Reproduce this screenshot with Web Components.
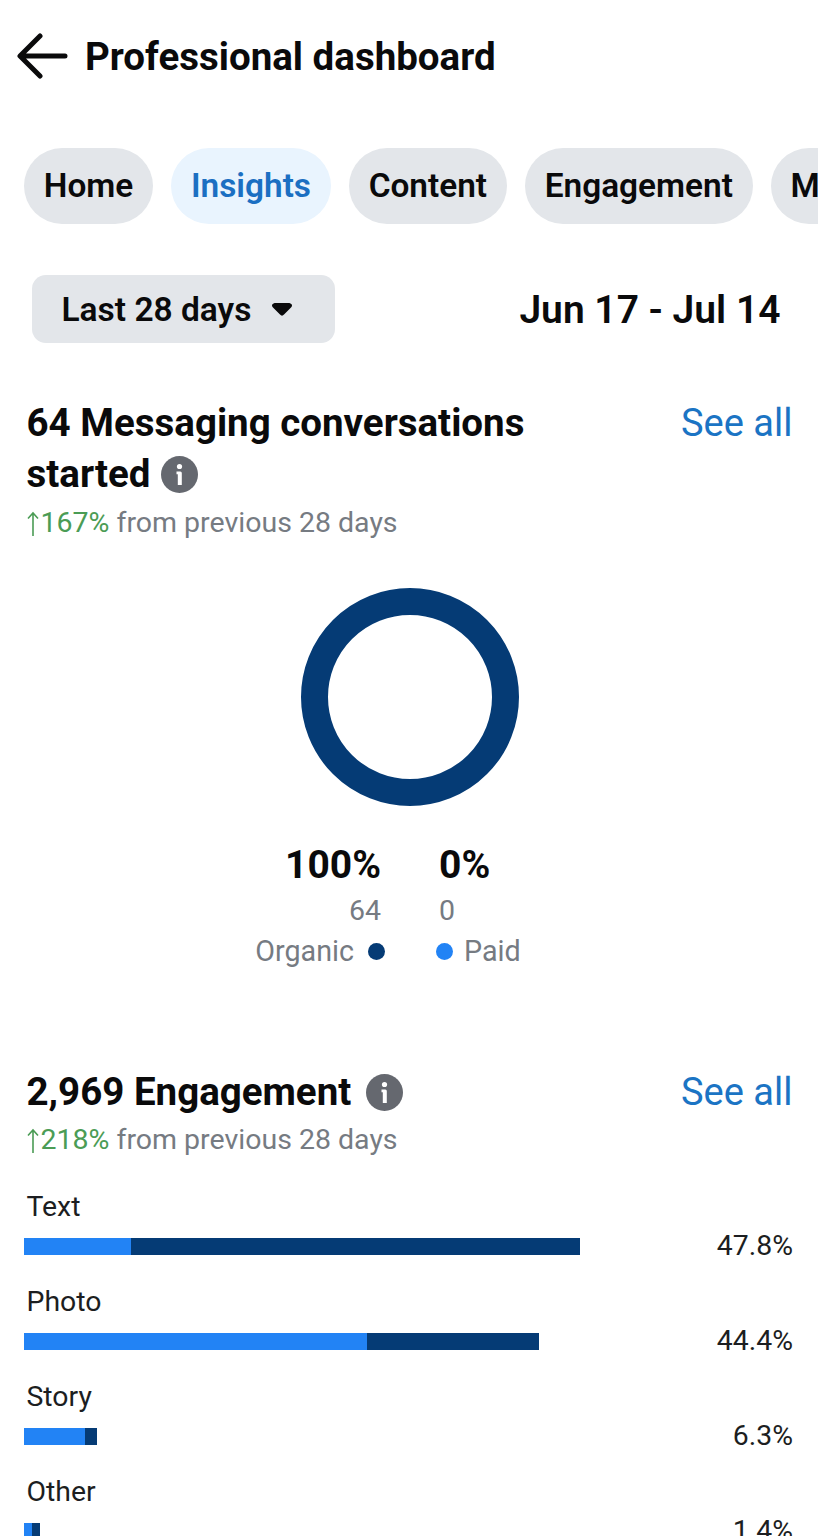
<!DOCTYPE html>
<html><head><meta charset="utf-8">
<style>
html,body{margin:0;padding:0;background:#fff;height:1536px;overflow:hidden}
body{font-family:Roboto,"Liberation Sans",sans-serif;color:#0a0a0b;width:818px}
</style></head><body>
<dash-header>Professional dashboard</dash-header>
<tab-bar>
  <tab-pill>Home</tab-pill><tab-pill active>Insights</tab-pill><tab-pill>Content</tab-pill><tab-pill>Engagement</tab-pill><tab-pill>Monetization</tab-pill>
</tab-bar>
<date-row></date-row>
<metric-section style="--top:54px;--ig:11px;--sg:7px" change="167%">64 Messaging conversations<br>started</metric-section>
<donut-chart></donut-chart>
<metric-section style="--top:95px;--ig:15px;--sg:5px" change="218%">2,969 Engagement</metric-section>
<bar-list>
  <bar-row label="Text" value="47.8%" total="556" light="107"></bar-row>
  <bar-row label="Photo" value="44.4%" total="515" light="343"></bar-row>
  <bar-row label="Story" value="6.3%" total="73" light="61"></bar-row>
  <bar-row label="Other" value="1.4%" total="16" light="8"></bar-row>
</bar-list>
<script>
const def=(name,html,cls)=>{
  const t=document.createElement('template');t.innerHTML=html;
  customElements.define(name,class extends HTMLElement{
    constructor(){super();this.attachShadow({mode:'open'}).appendChild(t.content.cloneNode(true));}
    connectedCallback(){cls&&cls(this,this.shadowRoot)}
  });
};
def('dash-header',`<style>
:host{display:flex;align-items:center;height:112px;padding-left:17px;gap:17px;font-size:38.500px;font-weight:700}
svg{display:block;width:51px;height:46px;flex:none}
</style><svg viewBox="0 0 51 46" fill="none" stroke="#0a0a0b" stroke-width="5" stroke-linecap="round" stroke-linejoin="round"><path d="M23 3 3 23 23 43M4 23H48"/></svg><slot></slot>`);
def('tab-bar',`<style>
:host{display:flex;gap:18px;margin-top:36px;padding-left:24px;overflow:hidden;width:794px}
</style><slot></slot>`);
def('tab-pill',`<style>
:host{display:block;flex:none;height:76px;line-height:75px;padding:0 19.800px;border-radius:38px;background:#e3e6ea;font-size:33.400px;font-weight:600;white-space:nowrap}
:host([active]){background:#e9f4fe;color:#1b6fc2}
</style><slot></slot>`);
def('date-row',`<style>
:host{display:flex;align-items:center;justify-content:space-between;margin-top:51px;padding:0 37.500px 0 32px;height:68px}
.dd{display:flex;align-items:center;box-sizing:border-box;width:303px;height:68px;background:#e3e6ea;border-radius:14px;padding-left:29.500px;gap:20px;font-size:33.500px;font-weight:600}
svg{width:22px;height:15px;display:block}
.d{font-size:39px;font-weight:600;padding-top:1px}
</style><div class="dd"><span>Last 28 days</span><svg viewBox="0 0 22 15"><path d="M5 1C8 1 14 1 17 1 21 1 22 3.500 20 5.500L13 12.500C11.800 14 10.200 14 9 12.500L2 5.500C0 3.500 1 1 5 1Z" fill="#0a0a0b"/></svg></div><div class="d">Jun 17 - Jul 14</div>`);
def('metric-section',`<style>
:host{display:block;margin-top:var(--top);padding:0 25.500px 0 26.500px}
.h{display:flex;justify-content:space-between;align-items:flex-start}
.t{font-size:38.500px;font-weight:700;line-height:51px}
.a{font-size:38px;color:#1b74c4;line-height:51px;padding-top:1px}
svg.i{width:37px;height:37px;vertical-align:-6px;margin-left:var(--ig)}
.s{font-size:28.500px;line-height:34px;color:#767b82;margin-top:var(--sg);white-space:nowrap}
.c{color:#4b9c55}
svg.u{width:12px;height:26px;vertical-align:-5px;margin:0 2px 0 0}
</style><div class="h"><div class="t"><slot></slot><svg class="i" viewBox="0 0 37 37"><circle cx="18.500" cy="18.500" r="18.500" fill="#65686f"/><circle cx="18.500" cy="10.500" r="2.600" fill="#fff"/><path d="M15.500 15.500H19.300Q20.800 15.500 20.800 17V29H16.800V18.300H15.500Z" fill="#fff"/></svg></div><div class="a">See all</div></div><div class="s"><svg class="u" viewBox="0 0 12 26" fill="none" stroke="#4b9c55" stroke-width="1.600"><path d="M6 25V2M1 7.500 6 2l5 5.500"/></svg><span class="c"></span> from previous 28 days</div>`,
(h,s)=>{s.querySelector('.c').textContent=h.getAttribute('change')});
def('donut-chart',`<style>
:host{display:block;margin-top:48px}
svg{display:block;margin-left:301px;width:218px;height:218px}
.g{display:grid;grid-template-columns:381px 1fr;column-gap:58px;margin-top:37px}
.b{font-size:39px;font-weight:700;line-height:44px}
.n,.l{font-size:28.500px;color:#767b82;line-height:40px}
.n{margin-top:6px;line-height:36px}
.r{text-align:right}
.l{display:flex;align-items:center;gap:14px;margin-top:2px;font-size:28.700px}
.o{justify-content:flex-end;margin-right:-4px}
.p{margin-left:-3px;gap:11px}
i{width:17px;height:17px;border-radius:50%;display:block;flex:none}
</style><svg viewBox="0 0 218 218"><circle cx="109" cy="109" r="95.500" fill="none" stroke="#053b75" stroke-width="27"/></svg>
<div class="g"><div class="b r">100%</div><div class="b">0%</div><div class="n r">64</div><div class="n">0</div>
<div class="l o">Organic <i style="background:#053b75"></i></div><div class="l p"><i style="background:#2283f5"></i> Paid</div></div>`);
def('bar-list',`<style>:host{display:block;margin-top:33px}</style><slot></slot>`);
def('bar-row',`<style>
:host{display:block;height:95px;padding:0 25px 0 24px}
.l{font-size:28.400px;line-height:34px;padding-left:2.500px;color:#1c1e21}
.r{display:flex;align-items:center;justify-content:space-between;margin-top:12px;height:34px}
.t{display:flex;height:17px;margin-top:-14px}
.t b{display:block;background:#2283f5}.t u{display:block;background:#053b75;flex:1}
.v{font-size:28.400px;color:#1c1e21;margin-top:-15px}
</style><div class="l"></div><div class="r"><div class="t"><b></b><u></u></div><div class="v"></div></div>`,
(h,s)=>{s.querySelector('.l').textContent=h.getAttribute('label');s.querySelector('.v').textContent=h.getAttribute('value');
s.querySelector('.t').style.width=h.getAttribute('total')+'px';s.querySelector('b').style.width=h.getAttribute('light')+'px';});
</script>
</body></html>
